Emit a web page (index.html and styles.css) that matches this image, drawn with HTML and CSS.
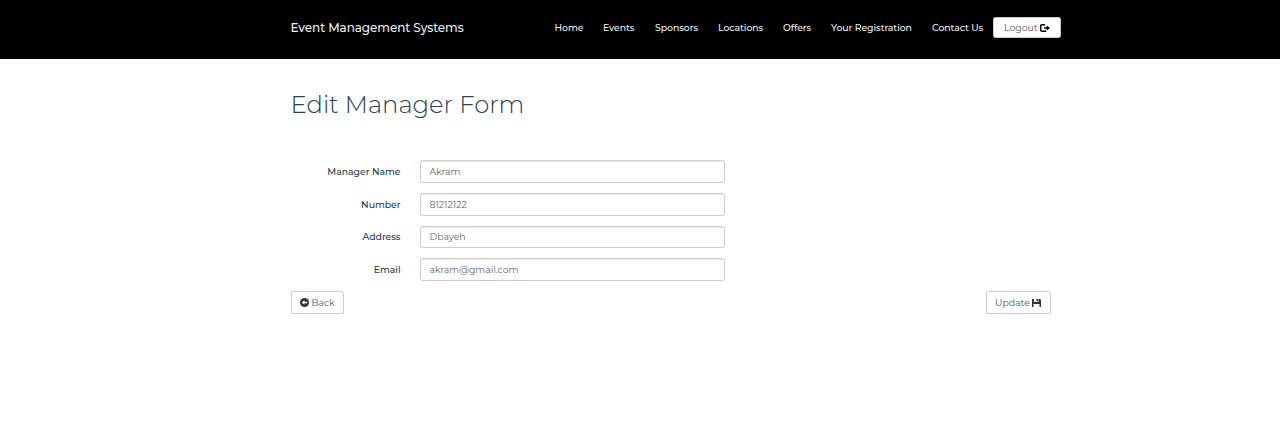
FILE: index.html
```
<!DOCTYPE html>
<html lang="en">
<head>
<meta charset="utf-8">
<title>Event Management Systems</title>
<link rel="stylesheet" href="styles.css">
</head>
<body>
<header class="navbar">
  <div class="container navbar-inner">
    <a class="brand">Event Management Systems</a>
    <nav class="nav">
      <a class="home">Home</a>
      <a class="events">Events</a>
      <a class="sponsors">Sponsors</a>
      <a class="locations">Locations</a>
      <a class="offers">Offers</a>
      <a class="registration">Your Registration</a>
      <a class="contact">Contact Us</a>
    </nav>
    <button class="btn logout"><span>Logout</span><svg width="10" height="8" viewBox="0 0 10 8"><path d="M5 .7H2Q.7.700.7 2v4Q.7 7.300 2 7.300H5.500V6.200" fill="none" stroke="#000" stroke-width="1.400"/><path d="M4 3.200h2.700V1.400L10 4 6.700 6.600V4.800H4z"/></svg></button>
  </div>
</header>
<main class="container">
  <h1>Edit Manager Form</h1>
  <form>
    <div class="row"><label for="name">Manager Name</label><input id="name" value="Akram"></div>
    <div class="row"><label for="number">Number</label><input id="number" value="81212122"></div>
    <div class="row address"><label for="address">Address</label><input id="address" value="Dbayeh"></div>
    <div class="row"><label for="email">Email</label><input id="email" value="akram@gmail.com"></div>
    <div class="actions">
      <button type="button" class="btn back"><svg width="9" height="9" viewBox="0 0 9 9"><circle cx="4.500" cy="4.500" r="4.500" fill="#333"/><path d="M1.800 4.500 4.400 2.200v1.600h2.800v1.400H4.400v1.600z" fill="#fff"/></svg><span>Back</span></button>
      <button type="button" class="btn update"><span>Update</span><svg width="9" height="8" viewBox="0 0 9 8"><path d="M0 0h2v3h4.500V0H8l1 1v7H7.500V5h-6v3H0zM4.500 0H6v2.300H4.500z" fill="#333"/></svg></button>
    </div>
  </form>
</main>
</body>
</html>
```
FILE: styles.css
```
* { box-sizing: border-box; }
body { margin: 0; background: #fff; color: #2c3e50; font: 9.330px/14px Montserrat, Inter, "Open Sans", sans-serif; }
.container { width: 860px; margin-left: 250px; padding-left: 41px; }
.navbar { height: 59px; background: #000; }
.navbar-inner { display: flex; align-items: flex-start; }
.brand { width: 264px; margin-left: -.5px; padding-top: 20px; font-size: 12px; line-height: 16px; font-weight: 500; color: #ecf0f1; white-space: nowrap; letter-spacing: -.08px; }
.nav { display: flex; gap: 20px; padding-top: 21px; color: #ecf0f1; font-weight: 500; letter-spacing: -.06px; white-space: nowrap; }
.home { width: 28.500px; }
.events { width: 32px; }
.sponsors { width: 43px; }
.locations { width: 45px; }
.offers { width: 28px; }
.registration { width: 81px; }
.contact { width: 51px; }
.btn { display: flex; align-items: center; gap: 3px; height: 23px; padding: 1px 8px 0; font: inherit; line-height: 12px; color: #555; background: #fff; border: 1px solid #ccc; border-radius: 2.500px; box-shadow: 0 1px 0 #e0e0e0; }
.btn svg { flex: none; }
.logout { width: 68px; height: 21px; margin: 17px 0 0 9.500px; padding: 0 0 0 10.500px; box-shadow: none; }
.logout span { width: 33px; }
h1 { margin: 28px 0 38.400px -.5px; font-size: 24.250px; line-height: 35px; font-weight: 300; }
.row { display: flex; align-items: center; height: 22.670px; margin-bottom: 10px; }
label { width: 109.500px; margin-right: 19.500px; padding-top: 1px; text-align: right; font-weight: 500; letter-spacing: -.04px; color: #2c3e50; }
input { width: 305px; height: 22.670px; padding: 0 8.500px; font: inherit; color: #666; background: #fff; border: 1px solid #ccc; border-radius: 2.500px; box-shadow: inset 0 1px 1px rgba(0,0,0,.08); outline: 0; }
.address label { padding: 0; }
.address input { padding-bottom: 1px; }
.actions { display: flex; justify-content: space-between; width: 760px; }
.back { width: 53px; padding-left: 7.500px; }
.back svg, .update svg { margin-top: -1px; }
.update { width: 65px; gap: 2px; }
.update span { width: 34.500px; }
```
